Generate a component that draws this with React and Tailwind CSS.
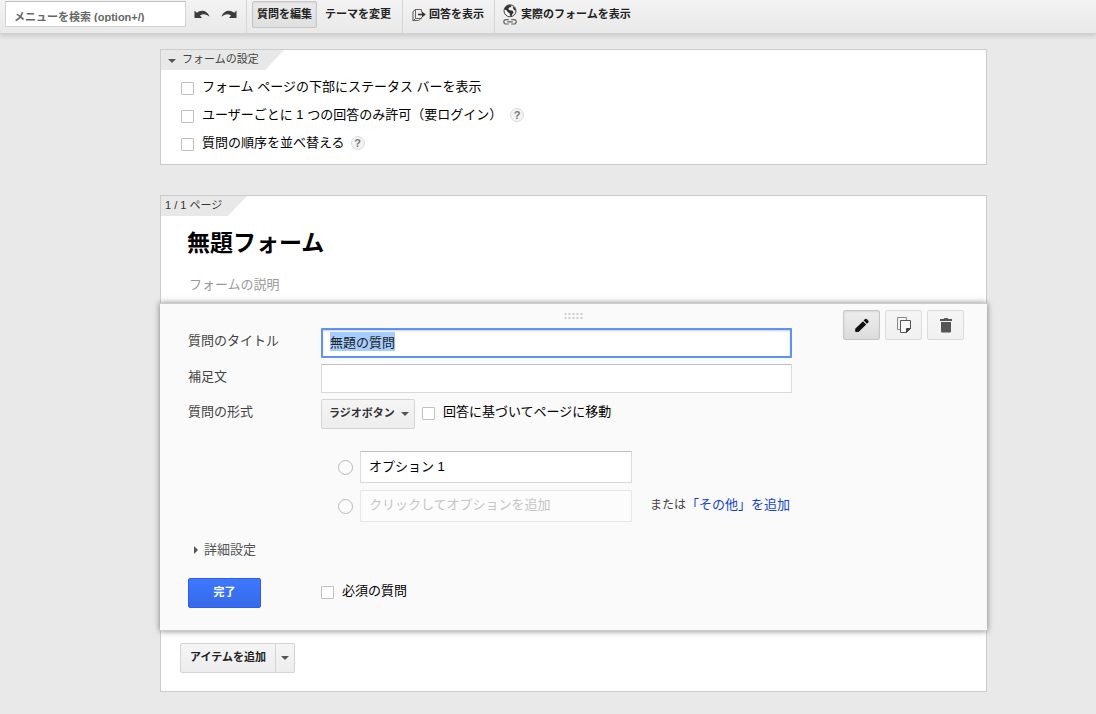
import { useEffect, useRef } from "react";

function Caret({ className = "" }) {
  return (
    <svg viewBox="0 0 8 4" aria-hidden="true" className={`h-1 w-2 fill-[#555] ${className}`}>
      <path d="M0 0h8L4 4z" />
    </svg>
  );
}

function UndoIcon({ className = "" }) {
  return (
    <svg viewBox="0 0 16 9" aria-hidden="true" className={`h-[9px] w-4 fill-[#3c3c3c] ${className}`}>
      <path d="M.5 .5 2.800 2.800C6.600-.6 13-.2 15.600 6.800 12.200 3.700 8.800 3.500 6 5.600L8 8H.5z" />
    </svg>
  );
}

function AnswersIcon() {
  return (
    <svg viewBox="0 0 14 14" aria-hidden="true" className="h-3.5 w-3.5 fill-none stroke-[#555]">
      <path d="M9.500 4.500V1.500H3.500V10.500H9.500V9" strokeWidth=".9" />
      <path d="M3.500 1.500 1 3.500V13L3.500 10.500" />
      <path d="M1 12.500H6.500L9 10.500" strokeWidth=".9" />
      <path d="M6 6.500h5" strokeWidth="1.600" className="stroke-[#333]" />
      <path d="M10 3.600 13.800 6.500 10 9.400z" className="fill-[#333] stroke-none" />
    </svg>
  );
}

function LiveFormIcon() {
  return (
    <svg viewBox="0 0 14 21" aria-hidden="true" className="h-[21px] w-3.5">
      <circle cx="7" cy="6.800" r="6" className="fill-[#f4f4f4] stroke-[#444]" strokeWidth="1" />
      <path d="M1.200 5.200C2 2.600 4.200 1 6.600.900L8.600 1.800 7.800 3.200 6 3.600 5.400 5 6.600 6.200 9.400 6.600 10.600 8.200 9.400 10.200 8.400 12.400 6.900 11.400 6.600 9.200 4.600 8 3.800 6.600z" className="fill-[#333]" />
      <path d="M9.600 2.200 12 4 13 6.800 11.300 6.300 10.200 4.600z" className="fill-[#333]" />
      <g className="fill-none stroke-[#666]" strokeWidth="1.200">
        <path d="M5.800 15.600H3a2.200 2.200 0 0 0 0 4.400H5.800M8.200 15.600h2.800a2.200 2.200 0 0 1 0 4.400H8.200M4.200 17.800h5.600" />
      </g>
    </svg>
  );
}

function PencilIcon() {
  return (
    <svg viewBox="0 0 16 16" aria-hidden="true" className="h-4 w-4 fill-[#111]">
      <path d="M1.200 11.800 9 4.200l3.200 3.200-7.700 7.600-2.500.1q-.8 0-.8-.8z" />
      <path d="m9.700 3.500 1.300-1.300q.9-.8 1.800 0l1.500 1.500q.8.900 0 1.800l-1.400 1.300z" />
    </svg>
  );
}

function CopyIcon() {
  return (
    <svg viewBox="0 0 16 18" aria-hidden="true" className="h-[18px] w-4">
      <path d="M4 13.500H1.500v-12h9V4" className="fill-none stroke-[#888]" />
      <path d="M4.500 4.500h10v8l-4 4h-6z" className="fill-[#fafafa] stroke-[#555]" />
      <path d="M14.500 12.500h-4v4z" className="fill-[#444] stroke-[#444]" />
    </svg>
  );
}

function TrashIcon() {
  return (
    <svg viewBox="0 0 14 16" aria-hidden="true" className="h-4 w-3.5 fill-[#555]">
      <path d="M1 2h3.500l1-1h3l1 1H13v2H1zM2 5h10v9.500q0 1-1 1H3q-1 0-1-1z" />
    </svg>
  );
}

function Help({ label }) {
  return (
    <button
      type="button"
      aria-label={label}
      className="flex h-3.5 w-3.5 items-center justify-center rounded-full border border-[#ddd] bg-[#f3f3f3] text-[11px] leading-none font-bold text-[#777]"
    >
      ?
    </button>
  );
}

function Check({ id, children }) {
  return (
    <div className="flex items-center gap-2">
      <input
        id={id}
        type="checkbox"
        className="mt-0.5 h-[13px] w-[13px] appearance-none rounded-[1px] border border-[#c0c0c0] bg-white checked:bg-[#555]"
      />
      <label htmlFor={id} className="leading-5 text-black">
        {children}
      </label>
    </div>
  );
}

function IconButton({ label, active, children }) {
  return (
    <button
      type="button"
      aria-label={label}
      className={`flex h-[30px] w-[37px] items-center justify-center rounded-[2px] border ${
        active
          ? "border-[#c6c6c6] bg-linear-to-b from-[#eee] to-[#dcdcdc] shadow-[inset_0_1px_2px_rgba(0,0,0,0.1)]"
          : "border-[#dcdcdc] bg-linear-to-b from-[#f5f5f5] to-[#f1f1f1]"
      }`}
    >
      {children}
    </button>
  );
}

function Toolbar() {
  return (
    <header className="flex h-[34px] border-b border-[#d0d0d0] bg-linear-to-b from-[#f3f3f3] to-[#e9e9e9] text-[11px] font-bold whitespace-nowrap text-[#222] shadow-[0_2px_5px_rgba(0,0,0,0.14)]">
      <div className="flex w-[246px] items-start pt-px pl-[5px]">
        <div className="h-[26px] w-[181px] border border-[#d4d4d4] border-t-[#c0c0c0] bg-white">
          <div className="h-5 overflow-hidden">
            <input
              type="text"
              aria-label="メニューを検索"
              placeholder="メニューを検索 (option+/)"
              className="h-[30px] w-full bg-transparent px-2 font-bold outline-none placeholder:text-[#666]"
            />
          </div>
        </div>
        <button type="button" aria-label="元に戻す" className="ml-2 flex h-[26px] items-center">
          <UndoIcon />
        </button>
        <button type="button" aria-label="やり直し" className="ml-[11px] flex h-[26px] items-center">
          <UndoIcon className="-scale-x-100" />
        </button>
      </div>
      <div className="flex items-start gap-px border-l border-[#d4d4d4] pt-px pr-1 pl-[5px]">
        <button
          type="button"
          className="h-[27px] w-[65px] rounded-[2px] border border-[#c6c6c6] bg-linear-to-b from-[#ebebeb] to-[#dfdfdf] shadow-[inset_0_1px_2px_rgba(0,0,0,0.08)]"
        >
          質問を編集
        </button>
        <button type="button" className="h-[27px] px-[7px]">
          テーマを変更
        </button>
      </div>
      <div className="flex items-start border-l border-[#d4d4d4] pt-px pr-[10px] pl-[9px]">
        <button type="button" className="flex h-[27px] items-center gap-[3px]">
          <AnswersIcon />
          回答を表示
        </button>
      </div>
      <div className="flex items-start border-l border-[#d4d4d4] px-2 pt-px">
        <button type="button" className="flex h-[27px] items-center gap-1">
          <LiveFormIcon />
          実際のフォームを表示
        </button>
      </div>
    </header>
  );
}

function SettingsPanel() {
  return (
    <section className="border border-[#ccc] bg-white pb-[11px]">
      <h2 className="w-[123px] bg-[#e8e8e8] text-[11px] text-[#444] [clip-path:polygon(0_0,100%_0,calc(100%-19px)_100%,0_100%)]">
        <button type="button" className="flex h-5 items-center gap-1.5 pb-px pl-[7px]">
          <Caret className="mt-0.5" />
          フォームの設定
        </button>
      </h2>
      <div className="flex flex-col gap-2 pt-[7px] pl-5">
        <Check id="status-bar">フォーム ページの下部にステータス バーを表示</Check>
        <div className="flex items-center gap-2">
          <Check id="one-response">ユーザーごとに 1 つの回答のみ許可（要ログイン）</Check>
          <Help label="回答回数のヘルプ" />
        </div>
        <div className="flex items-center gap-1.5">
          <Check id="shuffle">質問の順序を並べ替える</Check>
          <Help label="並べ替えのヘルプ" />
        </div>
      </div>
    </section>
  );
}

const fieldClass =
  "w-full rounded-[1px] border border-[#d9d9d9] border-t-[#c0c0c0] bg-white px-2 text-black outline-none";

function QuestionEditor() {
  const title = useRef(null);

  useEffect(() => {
    title.current.focus();
    title.current.select();
  }, []);

  return (
    <section className="relative -mx-px flex justify-between gap-6 border-y border-[#ccc] bg-[#fafafa] pt-1.5 pr-[23px] pb-[22px] pl-7 shadow-[0_0_6px_rgba(0,0,0,0.5)]">
      <svg
        viewBox="0 0 19 7"
        aria-hidden="true"
        className="absolute top-[9px] left-1/2 h-[7px] w-[19px] -translate-x-1/2 fill-[#ccc]"
      >
        <path d="M0 0h2v2H0zM4 0h2v2H4zM8 0h2v2H8zM12 0h2v2h-2zM16 0h2v2h-2zM0 4h2v2H0zM4 4h2v2H4zM8 4h2v2H8zM12 4h2v2h-2zM16 4h2v2h-2z" />
      </svg>

      <div className="min-w-0 flex-1 pt-[18px]">
        <div className="flex flex-col gap-1.5">
          <div className="flex">
            <label htmlFor="q-title" className="w-[133px] shrink-0 pt-[3px] leading-5 text-[#444]">
              質問のタイトル
            </label>
            <div className="w-[471px]">
              <input
                id="q-title"
                ref={title}
                type="text"
                defaultValue="無題の質問"
                className="block h-[30px] w-full rounded-[1px] border-2 border-[#5f92f5] bg-white px-[7px] pb-1 shadow-[inset_0_1px_2px_rgba(0,0,0,0.2)] outline-none selection:bg-[#a5cdff] selection:text-[#222]"
              />
            </div>
          </div>
          <div className="flex">
            <label htmlFor="q-help" className="w-[133px] shrink-0 pt-[3px] leading-5 text-[#444]">
              補足文
            </label>
            <div className="w-[471px]">
              <input id="q-help" type="text" className={`block h-[29px] ${fieldClass}`} />
            </div>
          </div>
          <div className="flex">
            <label htmlFor="q-type" className="w-[133px] shrink-0 pt-[3px] leading-5 text-[#444]">
              質問の形式
            </label>
            <div className="flex items-start gap-[7px]">
              <div className="relative">
                <select
                  id="q-type"
                  className="block h-[30px] w-[94px] appearance-none rounded-[2px] border border-[#d4d4d4] bg-linear-to-b from-[#f5f5f5] to-[#ededed] pr-4 pb-0.5 pl-[7px] text-[11px] font-bold text-[#333]"
                >
                  <option>ラジオボタン</option>
                </select>
                <Caret className="pointer-events-none absolute top-[13px] right-1.5" />
              </div>
              <div className="pt-[3px]">
                <Check id="branch">回答に基づいてページに移動</Check>
              </div>
            </div>
          </div>
        </div>

        <div className="mt-[22px] flex flex-col gap-[7px] pl-[150px]">
          <div className="flex items-center">
            <input
              type="radio"
              name="option"
              aria-label="オプション 1"
              className="h-[15px] w-[15px] shrink-0 appearance-none rounded-full border border-[#b8b8b8] bg-[#fcfcfc]"
            />
            <div className="ml-[7px] w-[272px]">
              <input
                type="text"
                aria-label="オプション 1 のテキスト"
                defaultValue="オプション 1"
                className={`block h-8 pb-[3px] ${fieldClass}`}
              />
            </div>
          </div>
          <div className="flex items-center">
            <input
              type="radio"
              name="option"
              aria-label="新しいオプション"
              className="h-[15px] w-[15px] shrink-0 appearance-none rounded-full border border-[#b8b8b8] bg-[#fcfcfc]"
            />
            <div className="ml-[7px] w-[272px]">
              <input
                type="text"
                aria-label="オプションを追加"
                placeholder="クリックしてオプションを追加"
                className="block h-8 w-full rounded-[1px] border border-[#e6e6e6] bg-[#fcfcfc] px-2 pb-[3px] outline-none placeholder:text-[#c4c4c4]"
              />
            </div>
            <p className="ml-[18px] pb-[3px] whitespace-nowrap text-[#444]">
              <span className="text-[12px]">または</span>
              <a href="#other" className="text-[#1144cc]">
                「その他」を追加
              </a>
            </p>
          </div>
        </div>

        <button type="button" className="mt-[18px] ml-1.5 flex h-5 items-center gap-1.5 text-[#555]">
          <svg viewBox="0 0 4 8" aria-hidden="true" className="h-2 w-1 fill-[#555]">
            <path d="M0 0l4 4-4 4z" />
          </svg>
          詳細設定
        </button>

        <div className="mt-[18px] flex">
          <div className="w-[133px]">
            <button
              type="button"
              className="block h-[30px] w-[73px] rounded-[2px] border border-[#2f5bf0] bg-linear-to-b from-[#3f78ff] to-[#356ae8] pb-0.5 text-[11px] font-bold text-white"
            >
              完了
            </button>
          </div>
          <div className="pt-[3px]">
            <Check id="required">必須の質問</Check>
          </div>
        </div>
      </div>

      <div className="flex gap-[5px]">
        <IconButton label="編集" active>
          <PencilIcon />
        </IconButton>
        <IconButton label="複製">
          <CopyIcon />
        </IconButton>
        <IconButton label="削除">
          <TrashIcon />
        </IconButton>
      </div>
    </section>
  );
}

function PagePanel() {
  return (
    <section className="border border-[#ccc] bg-white">
      <p className="h-5 w-[86px] bg-[#e8e8e8] pl-1 text-[11px] leading-[18px] text-[#333] [clip-path:polygon(0_0,100%_0,calc(100%-19px)_100%,0_100%)]">
        1 / 1 ページ
      </p>
      <h1 className="pt-[11px] pl-[26px] text-[23px] leading-8 font-bold text-black">無題フォーム</h1>
      <p className="pt-4 pb-2 pl-7 leading-5 text-[#999]">フォームの説明</p>
      <QuestionEditor />
      <div className="flex pt-3 pb-[18px] pl-[19px]">
        <button
          type="button"
          className="h-[30px] w-[96px] rounded-l-[2px] border border-[#d4d4d4] bg-linear-to-b from-[#f5f5f5] to-[#ededed] pb-0.5 text-[11px] font-bold text-[#222]"
        >
          アイテムを追加
        </button>
        <button
          type="button"
          aria-label="アイテムの種類を選択"
          className="flex h-[30px] w-[19px] items-center justify-center rounded-r-[2px] border border-l-0 border-[#d4d4d4] bg-linear-to-b from-[#f5f5f5] to-[#ededed]"
        >
          <Caret />
        </button>
      </div>
    </section>
  );
}

export default function App() {
  return (
    <div
      lang="ja"
      className="min-h-screen bg-[#e9e9e9] font-['Liberation_Sans','Noto_Sans_CJK_JP',sans-serif] text-[13px] text-[#222]"
    >
      <Toolbar />
      <main className="flex flex-col gap-[30px] pt-[15px] pr-[109px] pb-[22px] pl-40">
        <SettingsPanel />
        <PagePanel />
      </main>
    </div>
  );
}
